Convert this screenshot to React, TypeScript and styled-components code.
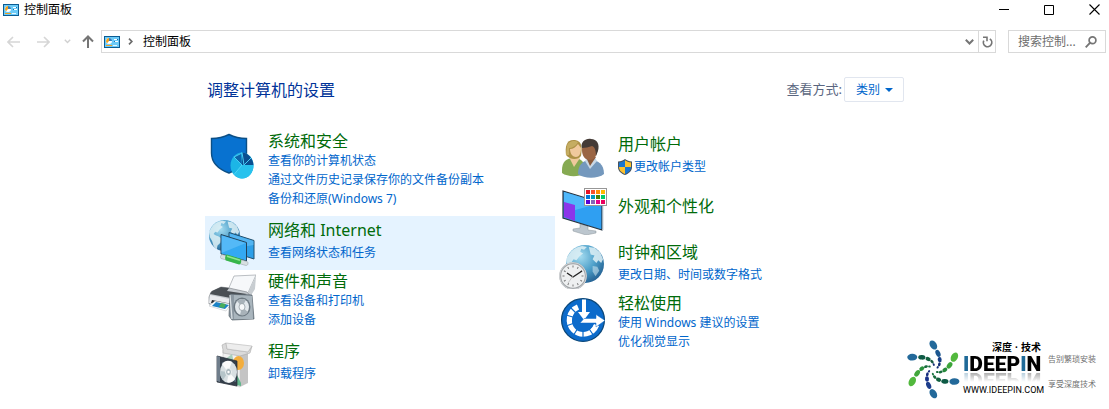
import React from 'react';
import styled, { createGlobalStyle } from 'styled-components';

const GlobalStyle = createGlobalStyle`
  *, *::before, *::after { box-sizing: border-box; }
  body {
    margin: 0;
    background: #fff;
    color: #000;
    font: 12px/19px "Noto Sans", "Noto Sans CJK SC", sans-serif;
  }
  h1, h2, p, ul { margin: 0; padding: 0; font-weight: 400; }
  ul { list-style: none; }
  svg { display: block; flex: none; }
  button, input, select { font: inherit; color: inherit; }
`;

const Window = styled.div`
  position: relative;
  min-height: 100vh;
  padding-bottom: 16px;
`;

const TitleBar = styled.header`
  display: flex;
  align-items: center;
  height: 19px;
  padding-left: 3px;
`;

const WindowTitle = styled.p`
  flex: 1;
  margin-left: 5px;
`;

const WindowButton = styled.button<{ $last?: boolean }>`
  display: flex;
  align-items: center;
  width: ${(p) => (p.$last ? 37 : 45)}px;
  height: 19px;
  padding: 0 0 0 17px;
  border: 0;
  background: none;
`;

const NavBar = styled.nav`
  display: flex;
  align-items: stretch;
  height: 23px;
  margin-top: 11px;
  padding: 0 3px 0 7px;
`;

const NavButton = styled.button<{ $width: number }>`
  display: flex;
  align-items: center;
  width: ${(p) => p.$width}px;
  padding: 0;
  border: 0;
  background: none;
`;

const AddressBar = styled.div`
  flex: 1;
  display: flex;
  align-items: center;
  min-width: 0;
  border: 1px solid #d9d9d9;
  padding-left: 2px;
`;

const Crumb = styled.a`
  flex: 1;
  margin-left: 9px;
  color: #000;
  text-decoration: none;
`;

const AddressButton = styled.button<{ $divided?: boolean }>`
  display: flex;
  align-items: center;
  justify-content: center;
  align-self: stretch;
  width: 17px;
  padding: 0;
  border: 0;
  border-left: ${(p) => (p.$divided ? '1px solid #d9d9d9' : '0')};
  background: none;
`;

const SearchBox = styled.label`
  display: flex;
  align-items: center;
  width: 98px;
  margin-left: 12px;
  padding: 0 8px 0 9px;
  border: 1px solid #d9d9d9;
`;

const SearchInput = styled.input`
  flex: 1;
  min-width: 0;
  padding: 0;
  border: 0;
  outline: 0;
  background: none;
  &::placeholder { color: #6d6d6d; opacity: 1; }
`;

const Content = styled.main`
  max-width: 699px;
  margin: 24px auto 0;
`;

const ContentHeader = styled.div`
  display: flex;
  align-items: center;
  height: 25px;
  padding-left: 2px;
`;

const Heading = styled.h1`
  flex: 1;
  font-size: 16px;
  line-height: 24px;
  color: #003399;
`;

const ViewLabel = styled.label`
  font-size: 13px;
  color: #5a6680;
`;

const SelectWrap = styled.span`
  display: grid;
  align-items: center;
  margin-left: 2px;
  svg { grid-area: 1 / 1; justify-self: end; margin-right: 11px; pointer-events: none; }
`;

const ViewSelect = styled.select`
  grid-area: 1 / 1;
  appearance: none;
  width: 60px;
  height: 25px;
  padding: 0 0 0 11px;
  border: 1px solid #e1e6ef;
  border-radius: 2px;
  background: #fff;
  color: #0066cc;
`;

const Columns = styled.div`
  display: grid;
  grid-template-columns: 350fr 349fr;
  align-items: start;
  margin-top: 28px;
`;

type Density = 'dense' | 'normal' | 'title';
const topPadding: Record<Density, number> = { dense: 1, normal: 4, title: 12 };

const CategoryItem = styled.li<{ $active?: boolean }>`
  display: flex;
  gap: 12px;
  min-height: 54px;
  padding-left: 3px;
  background: ${(p) => (p.$active ? '#e5f3ff' : 'transparent')};
`;

const CategoryIcon = styled.span`
  flex: none;
  width: 48px;
  padding-top: 3px;
  line-height: 0;
`;

const CategoryBody = styled.div<{ $density: Density }>`
  padding: ${(p) => topPadding[p.$density]}px 0 8px;
  h2 + ul { margin-top: ${(p) => (p.$density === 'normal' ? 3 : 0)}px; }
`;

const CategoryTitle = styled.h2`
  font-size: 16px;
  line-height: 20px;
  a { color: #006b0a; text-decoration: none; }
`;

const TaskLink = styled.a`
  display: flex;
  align-items: center;
  gap: 2px;
  color: #0066cc;
  text-decoration: none;
`;

const Brand = styled.aside`
  position: absolute;
  right: 10px;
  bottom: 8px;
  display: flex;
  height: 62px;
`;

const BrandText = styled.div`
  display: flex;
  flex-direction: column;
  width: 78px;
  padding-top: 3px;
  white-space: nowrap;
`;

const BrandCn = styled.p`
  font-family: "Liberation Sans", "Noto Sans CJK SC", sans-serif;
  font-size: 10px;
  line-height: 12px;
  font-weight: 700;
  text-align: right;
`;

const BrandName = styled.p`
  height: 18px;
  font: 900 21px/20px Roboto, "Liberation Sans", sans-serif;
  -webkit-box-reflect: below 0 linear-gradient(transparent 45%, rgba(0, 0, 0, 0.35));
  span { color: #1f6a98; }
`;

const BrandUrl = styled.p`
  margin-top: 12px;
  font-family: Roboto, "Liberation Sans", sans-serif;
  font-size: 9px;
  line-height: 12px;
`;

const BrandSlogan = styled.div`
  display: flex;
  flex-direction: column;
  gap: 13px;
  width: 51px;
  margin-left: 7px;
  padding-top: 14px;
  font-size: 8px;
  line-height: 12px;
  color: #707070;
  white-space: nowrap;
`;

const PanelIcon = () => (
  <svg width="16" height="12" viewBox="0 0 16 12">
    <rect width="16" height="12" fill="#0b5c93" />
    <rect x="1" y="1" width="14" height="10" fill="#6ccbf8" />
    <circle cx="5" cy="5" r="3" fill="#fff" />
    <path d="M5 5V2A3 3 0 0 0 3 7.200Z" fill="#f0a020" />
    <path d="M5 5V2a3 3 0 0 1 3 3Z" fill="#2b7fc0" />
    <path d="M10 3.500h4M10 5.500h4" stroke="#fff" />
    <path d="M13 3.500h1M10 5.500h1" stroke="#1770b0" />
    <path d="M2 9.500h6" stroke="#f0a020" />
    <path d="M9 9.500h4" stroke="#e6f7ff" />
  </svg>
);

const SecurityIcon = () => (
  <svg width="48" height="48" viewBox="0 0 48 48">
    <path d="M3.500 5.500C10 5.500 16 4 21 1.500c5 2.500 11 4 17.500 4V20c0 9-7 16-17.500 20C10 36 3.500 29 3.500 20Z" fill="#0872d0" stroke="#0b4f86" strokeWidth="1.400" />
    <ellipse cx="34" cy="32.500" rx="11.500" ry="13" fill="#1cb5e6" />
    <path d="M34 19.500c6 0 11 6 11.500 12.500L34 32Z" fill="#0b4f90" />
    <path d="M34 32 33 20l-7 4Z" fill="#0d64aa" />
    <path d="m34 19.500 2 12.500 7-7M34 32l-8-8 8-4" fill="none" stroke="#49cdf5" />
    <path d="m34 32 11.500 0c0 8-5 13.500-11.500 13.500-3 0-6-2-8-4Z" fill="#28c2ed" />
    <path d="m34 32-8 9.500" stroke="#4ed3f6" />
  </svg>
);

const Globe = ({ cx, cy, r, id }: { cx: number; cy: number; r: number; id: string }) => (
  <g>
    <defs>
      <radialGradient id={id} cx=".38" cy=".3" r=".75">
        <stop offset="0" stopColor="#a5dcf0" />
        <stop offset=".55" stopColor="#4d9fc9" />
        <stop offset="1" stopColor="#235f91" />
      </radialGradient>
    </defs>
    <circle cx={cx} cy={cy} r={r} fill={`url(#${id})`} />
    <g transform={`translate(${cx} ${cy}) scale(${r / 20})`} fill="#e0f1f6" opacity=".85">
      <path d="M-17-10c3-5 8-8 14-9l5 1-3 3-3-1-1 3 3 2-4 3-3 4-3-1-2 3 3 2 3 1 4 3-1 5-4 4-1 5-4-4-2-7-3-5-1-7Z" />
      <path d="m4-18 6 1 6 5 3 7-2 4-3-3-2 3-4-4 2-4-4-1-1-4Z" />
      <path d="m8 2 5 1 2 4-4 6-3-5Z" opacity=".6" />
    </g>
  </g>
);

const NetworkIcon = () => (
  <svg width="48" height="48" viewBox="0 0 48 48">
    <Globe cx={16.5} cy={16.5} r={15.5} id="net-globe" />
    <path d="m21 13.500 25 8V40l-25-8Z" fill="#2d9fe8" stroke="#23506e" />
    <path d="m21.500 14.500 24 7.500v4L23 30Z" fill="#77cafa" opacity=".5" />
    <path d="m13 15.500 25.500 8v18.500L13 35Z" fill="#34a9f2" stroke="#23435a" />
    <path d="m13.500 16.500 24.500 7.500L13.500 34Z" fill="#73c9fb" opacity=".5" />
    <path d="m14 35.500 25 7c1.500.5 1.500 4-1 4l-25-7c-1-1-.5-3.500 1-4Z" fill="#d7dfe1" stroke="#9ea9ad" strokeWidth=".6" />
    <path d="m19 35.500 13 4c2 1 1.500 6-1 6l-13-4c-1.500-1-1-6 1-6Z" fill="#36b64b" />
    <path d="m19 37.200 13 4" stroke="#91e590" strokeWidth="1.500" />
  </svg>
);

const HardwareIcon = () => (
  <svg width="48" height="48" viewBox="0 0 48 48">
    <path d="m20 17 6-14 22-1-9 20Z" fill="#f6f8fa" stroke="#a9afb4" strokeWidth=".8" />
    <path d="m39 22 9-19-1 13-5 8Z" fill="#c8cdd1" />
    <path d="m3 19 10-5 8 1 18 4 4 5v6l-18 5L1 31v-7Z" fill="#c5cacf" stroke="#767b80" strokeWidth=".6" />
    <path d="m4 18 9-4 8 1-2 3 20 3-11 5-26-5Z" fill="#4a4f54" />
    <path d="m2 22 24 5v7L1 30Z" fill="#e9ebee" />
    <path d="m4 27 20 4v3L3 30Z" fill="#24292e" />
    <path d="m7 28 16 3-5 7L1 33Z" fill="#fff" stroke="#b8bcc0" strokeWidth=".5" />
    <path d="m8 29 13 3-4 4-13-3Z" fill="#1c83c6" />
    <path d="m13 30 5 1-2 4-5-1Z" fill="#48ad5b" />
    <path d="m22 21 22 1 2 24-22 1-3-4Z" fill="#8c98a2" stroke="#525d66" strokeWidth=".7" />
    <path d="m26 22 18 1 1 23-19 0Z" fill="#a9b5bd" />
    <ellipse cx="34" cy="34" rx="8.500" ry="9.500" fill="#6d7982" />
    <ellipse cx="34" cy="34" rx="7" ry="8" fill="#e2e8ec" />
    <path d="M34 34 29 28c2-2 6-3 9-1ZM34 34l6 5c-2 3-5 4-8 3Z" fill="#a8b2b9" />
    <ellipse cx="34" cy="34" rx="3" ry="3.500" fill="#f7f9fa" stroke="#87929a" strokeWidth=".7" />
    <path d="m22 22 2 24" stroke="#d8dfe3" strokeWidth="1.300" />
  </svg>
);

const ProgramsIcon = () => (
  <svg width="48" height="48" viewBox="0 0 48 48">
    <path d="m15 10 17 3v34l-17-4Z" fill="#f1f1f1" stroke="#c6c6c6" strokeWidth=".6" />
    <path d="m32 13 8-3v33l-8 4Z" fill="#c4c4c4" />
    <path d="m15 10-1-5 4-2 1 6 21 3 4-6-2 7-10 3-17-3Z" fill="#dadada" stroke="#aaa" strokeWidth=".6" />
    <path d="m18 3 26 3-4 6-21-3Z" fill="#ededed" stroke="#b6b6b6" strokeWidth=".6" />
    <path d="m16 20 8-6 2 9-10 1Z" fill="#a9cfbc" />
    <ellipse cx="30.500" cy="23" rx="5.500" ry="7" fill="#f3ad3c" />
    <path d="m28 33 5 10v3l-5-1Z" fill="#62b58c" />
    <path d="m9 16 20 5v25L9 42Z" fill="#353f4b" stroke="#222a33" strokeWidth=".7" />
    <path d="m9 16 3 1v25l-3-1Z" fill="#6f7d8b" />
    <path d="m14 22 14 4v16l-15-4Z" fill="#71879b" opacity=".6" />
    <ellipse cx="20.500" cy="32" rx="8.500" ry="11" fill="#d8dfe2" />
    <path d="M20 32 14 24c3-4 7-4 10-2ZM21 32l6 7c-2 3-5 4-8 3Z" fill="#fafafa" />
    <path d="m20 32-8-1c0 4 1 7 3 9Z" fill="#b5c4c9" />
    <ellipse cx="20.500" cy="32" rx="3" ry="3.600" fill="#a9b7bd" stroke="#eef2f3" />
    <circle cx="20.500" cy="32" r="1.200" fill="#fff" />
  </svg>
);

const UsersIcon = () => (
  <svg width="48" height="48" viewBox="0 0 48 48">
    <path d="M4 37c0-8 4-12 12-12 7 0 11 4 11 12v4c-7 3-18 3-23-1Z" fill="#86aa52" />
    <path d="m12 26 4 8 6-9-3-4h-6Z" fill="#efc99b" />
    <path d="M8 22c-1-8 0-16 9-15 8 1 7 9 6 16-3 4-11 4-15-1Z" fill="#ad9146" />
    <path d="M12 16c3 0 6-2 8-5l3 4c0 6-2 9-5 9s-6-3-6-8Z" fill="#f0c99d" />
    <path d="M9 13c1-5 8-6 11-4-2 4-6 6-9 6v7l-3 0Z" fill="#c5ad62" />
    <path d="M20 41c0-9 5-14 12-14 8 0 14 4 14 14-6 5-20 5-26 0Z" fill="#7498bd" />
    <path d="m27 28 5 8 7-8-3-5h-6Z" fill="#c9d8e6" />
    <path d="m28 24 4 9 6-9Z" fill="#8a5a3c" />
    <path d="M24 17c0-7 4-10 9-9 6 0 8 4 6 11-1 5-3 8-7 8-5 0-8-4-8-10Z" fill="#9a6544" />
    <path d="M24 15c-2-6 4-10 9-9 6 0 9 5 7 12l-2 5c0-5-1-9-4-10-3 1-7 2-10 2Z" fill="#443b36" />
  </svg>
);

const swatches = [
  ['#e81123', '#f7502c', '#ff8c00', '#ffb900'],
  ['#0078d7', '#0099bc', '#498205', '#00cc6a'],
  ['#5a00d4', '#8764b8', '#e3008c', '#ea005e'],
];

const AppearanceIcon = () => (
  <svg width="50" height="48" viewBox="0 0 50 48">
    <path d="m22 37 8 2v4l8 1v2l-10 2-13-4v-2l7-1Z" fill="#bcc6ce" stroke="#8a949b" strokeWidth=".5" />
    <path d="m5 4 39 12v27L5 31Z" fill="#2f9ff2" stroke="#293541" strokeWidth="1.200" />
    <path d="m6 5 37 11L6 26Z" fill="#5cc2fd" opacity=".7" />
    <path d="m6 15 11 3v16L6 30Z" fill="#8b35ea" />
    <path d="m44 15 1 1v27l-1 0" stroke="#c5d4df" fill="none" />
    <rect x="26.500" y="1.500" width="22" height="17" fill="#fff" stroke="#979797" />
    {swatches.map((row, y) =>
      row.map((color, x) => <rect key={color} x={28 + x * 5} y={3 + y * 5} width="4" height="4" fill={color} />),
    )}
  </svg>
);

const ClockIcon = () => (
  <svg width="48" height="48" viewBox="0 0 48 48">
    <Globe cx={27} cy={23} r={19} id="clock-globe" />
    <circle cx="15" cy="35" r="12.800" fill="#eef0f1" stroke="#a2a6a9" strokeWidth="2" />
    <circle cx="15" cy="35" r="13.400" fill="none" stroke="#d9dcde" strokeWidth=".8" />
    {Array.from({ length: 12 }, (_, i) => (
      <path key={i} d="M15 24.500v2" stroke="#777" transform={`rotate(${i * 30} 15 35)`} />
    ))}
    <path d="m9 32 6 4 9-6" fill="none" stroke="#222" strokeWidth="1.400" />
    <path d="m15 35-5 7" stroke="#bbb" strokeWidth=".8" />
  </svg>
);

const AccessIcon = () => (
  <svg width="48" height="48" viewBox="0 0 48 48">
    <circle cx="25" cy="25" r="21.400" fill="#0c6bcb" stroke="#0b4779" strokeWidth="1.300" />
    <path d="M20 12A14 14 0 1 0 38.500 30" fill="none" stroke="#fff" strokeWidth="5.500" />
    <path d="M25 25 8 20M25 25 8 31M25 25 15 41M25 25v18M25 25l11 16M25 25 12 12" stroke="#0c6bcb" strokeWidth="1.200" />
    <circle cx="25" cy="26" r="11" fill="#0c6bcb" />
    <path d="M24 4.500h4V17h4l-6 8-6-8h4Z" fill="#fff" />
    <path d="M26 23.500h12v-4l9 6-9 6.500v-4H22Z" fill="#fff" stroke="#0c6bcb" strokeWidth=".5" />
  </svg>
);

const ShieldIcon = () => (
  <svg width="14" height="16" viewBox="0 0 14 16">
    <path d="M0 2.500C3 2.500 5 1.500 7 0c2 1.500 4 2.500 7 2.500V8c0 4-3 6.500-7 8-4-1.500-7-4-7-8Z" fill="#47535f" />
    <path d="M1 3.400C3.500 3.300 5.400 2.500 7 1.300V8H1Z" fill="#1976d2" />
    <path d="M7 1.300c1.600 1.200 3.500 2 6 2.100V8H7Z" fill="#fdc12d" />
    <path d="M1 8h6v7C3.500 13.600 1 11.500 1 8Z" fill="#fdc12d" />
    <path d="M7 8h6c0 3.500-2.500 5.600-6 7Z" fill="#1976d2" />
  </svg>
);

const arm = [
  { x: 0, y: -73, rx: 10, ry: 15, turn: -32 },
  { x: 14, y: -48, rx: 7, ry: 11, turn: -24 },
  { x: 19, y: -29, rx: 6, ry: 8, turn: -5 },
  { x: 18, y: -15, rx: 4, ry: 6, turn: 15 },
  { x: 13, y: -6, rx: 3, ry: 4, turn: 35 },
];
const armColors = [
  ['#23699a', '#1c568f', '#173f85', '#152f76', '#152f76'],
  ['#52b83d', '#3ca53a', '#26893b', '#176b3c', '#176b3c'],
  ['#23699a', '#0e5a45', '#12613f', '#176b3c', '#1b7540'],
  ['#23699a', '#1d3d8b', '#19328a', '#172c7d', '#172c7d'],
  ['#52b83d', '#41a63b', '#2b913d', '#176b3c', '#176b3c'],
  ['#23699a', '#0e5a45', '#12613f', '#165940', '#152f76'],
];

const SwirlLogo = () => (
  <svg width="58" height="62" viewBox="33 27 174 186">
    {armColors.map((colors, i) => (
      <g key={i} transform={`translate(118 118) rotate(${i * 60})`}>
        {arm.map((d, j) => (
          <ellipse key={j} rx={d.rx} ry={d.ry} fill={colors[j]} transform={`translate(${d.x} ${d.y}) rotate(${d.turn})`} />
        ))}
      </g>
    ))}
  </svg>
);

interface Task { text: string; shield?: boolean }
interface Category {
  title: string;
  icon: React.ReactNode;
  density: Density;
  active?: boolean;
  tasks: Task[];
}

const leftColumn: Category[] = [
  {
    title: '系统和安全', icon: <SecurityIcon />, density: 'dense',
    tasks: [{ text: '查看你的计算机状态' }, { text: '通过文件历史记录保存你的文件备份副本' }, { text: '备份和还原(Windows 7)' }],
  },
  { title: '网络和 Internet', icon: <NetworkIcon />, density: 'normal', active: true, tasks: [{ text: '查看网络状态和任务' }] },
  { title: '硬件和声音', icon: <HardwareIcon />, density: 'dense', tasks: [{ text: '查看设备和打印机' }, { text: '添加设备' }] },
  { title: '程序', icon: <ProgramsIcon />, density: 'normal', tasks: [{ text: '卸载程序' }] },
];

const rightColumn: Category[] = [
  { title: '用户帐户', icon: <UsersIcon />, density: 'normal', tasks: [{ text: '更改帐户类型', shield: true }] },
  { title: '外观和个性化', icon: <AppearanceIcon />, density: 'title', tasks: [] },
  { title: '时钟和区域', icon: <ClockIcon />, density: 'normal', tasks: [{ text: '更改日期、时间或数字格式' }] },
  { title: '轻松使用', icon: <AccessIcon />, density: 'dense', tasks: [{ text: '使用 Windows 建议的设置' }, { text: '优化视觉显示' }] },
];

const CategoryList = ({ items }: { items: Category[] }) => (
  <ul>
    {items.map((item) => (
      <CategoryItem key={item.title} $active={item.active}>
        <CategoryIcon>{item.icon}</CategoryIcon>
        <CategoryBody $density={item.density}>
          <CategoryTitle><a href="#">{item.title}</a></CategoryTitle>
          {item.tasks.length > 0 && (
            <ul>
              {item.tasks.map((task) => (
                <li key={task.text}>
                  <TaskLink href="#">{task.shield && <ShieldIcon />}{task.text}</TaskLink>
                </li>
              ))}
            </ul>
          )}
        </CategoryBody>
      </CategoryItem>
    ))}
  </ul>
);

export default function App() {
  return (
    <>
      <GlobalStyle />
      <Window>
        <TitleBar>
          <PanelIcon />
          <WindowTitle>控制面板</WindowTitle>
          <WindowButton aria-label="最小化">
            <svg width="10" height="10" viewBox="0 0 10 10"><path d="M0 4.500h10" stroke="#000" /></svg>
          </WindowButton>
          <WindowButton aria-label="最大化">
            <svg width="10" height="10" viewBox="0 0 10 10"><path d="M.5.5h9v9h-9Z" fill="none" stroke="#000" /></svg>
          </WindowButton>
          <WindowButton aria-label="关闭" $last>
            <svg width="11" height="11" viewBox="0 0 11 11"><path d="m.5.5 10 10m0-10-10 10" stroke="#000" strokeWidth="1.100" /></svg>
          </WindowButton>
        </TitleBar>

        <NavBar>
          <NavButton $width={30} aria-label="后退">
            <svg width="13" height="12" viewBox="0 0 13 12"><path d="M6 1 1 6l5 5M1 6h12" fill="none" stroke="#d6d6d6" strokeWidth="1.600" /></svg>
          </NavButton>
          <NavButton $width={27} aria-label="前进">
            <svg width="13" height="12" viewBox="0 0 13 12"><path d="m7 1 5 5-5 5m5-5H0" fill="none" stroke="#d6d6d6" strokeWidth="1.600" /></svg>
          </NavButton>
          <NavButton $width={18} aria-label="最近位置">
            <svg width="7" height="5" viewBox="0 0 7 5"><path d="m.8.8 2.700 2.700L6.200.8" fill="none" stroke="#d0d0d0" strokeWidth="1.400" /></svg>
          </NavButton>
          <NavButton $width={19} aria-label="向上">
            <svg width="12" height="13" viewBox="0 0 12 13"><path d="m1 6.500 5-5 5 5m-5-5V13" fill="none" stroke="#757575" strokeWidth="2" /></svg>
          </NavButton>
          <AddressBar>
            <PanelIcon />
            <svg width="14" height="7" viewBox="0 0 14 7"><path d="m9 .7 2.800 2.800L9 6.300" fill="none" stroke="#6b6b6b" strokeWidth="1.700" /></svg>
            <Crumb href="#">控制面板</Crumb>
            <AddressButton aria-label="以前的位置">
              <svg width="9" height="6" viewBox="0 0 9 6"><path d="m.8.8 3.700 3.700L8.200.8" fill="none" stroke="#757575" strokeWidth="2" /></svg>
            </AddressButton>
            <AddressButton $divided aria-label="刷新">
              <svg width="11" height="12" viewBox="0 0 11 12">
                <path d="M7.800 2.900A4.200 4.200 0 1 1 1.800 4.600" fill="none" stroke="#757575" strokeWidth="1.700" />
                <path d="M1 1.200h4v4" fill="none" stroke="#757575" strokeWidth="1.600" />
              </svg>
            </AddressButton>
          </AddressBar>
          <SearchBox>
            <SearchInput placeholder="搜索控制..." aria-label="搜索控制面板" />
            <svg width="12" height="12" viewBox="0 0 12 12">
              <circle cx="7.500" cy="4.300" r="3.400" fill="none" stroke="#757575" strokeWidth="1.700" />
              <path d="M5.200 6.700.7 11.300" stroke="#757575" strokeWidth="1.900" />
            </svg>
          </SearchBox>
        </NavBar>

        <Content>
          <ContentHeader>
            <Heading>调整计算机的设置</Heading>
            <ViewLabel htmlFor="view-by">查看方式:</ViewLabel>
            <SelectWrap>
              <ViewSelect id="view-by" defaultValue="category">
                <option value="category">类别</option>
              </ViewSelect>
              <svg width="8" height="4" viewBox="0 0 8 4"><path d="M0 0h8L4 4Z" fill="#0066cc" /></svg>
            </SelectWrap>
          </ContentHeader>
          <Columns>
            <CategoryList items={leftColumn} />
            <CategoryList items={rightColumn} />
          </Columns>
        </Content>

        <Brand>
          <SwirlLogo />
          <BrandText>
            <BrandCn>深度 · 技术</BrandCn>
            <BrandName><span>I</span>DEEP<span>I</span>N</BrandName>
            <BrandUrl>WWW.IDEEPIN.COM</BrandUrl>
          </BrandText>
          <BrandSlogan>
            <p>告别繁琐安装</p>
            <p>享受深度技术</p>
          </BrandSlogan>
        </Brand>
      </Window>
    </>
  );
}
